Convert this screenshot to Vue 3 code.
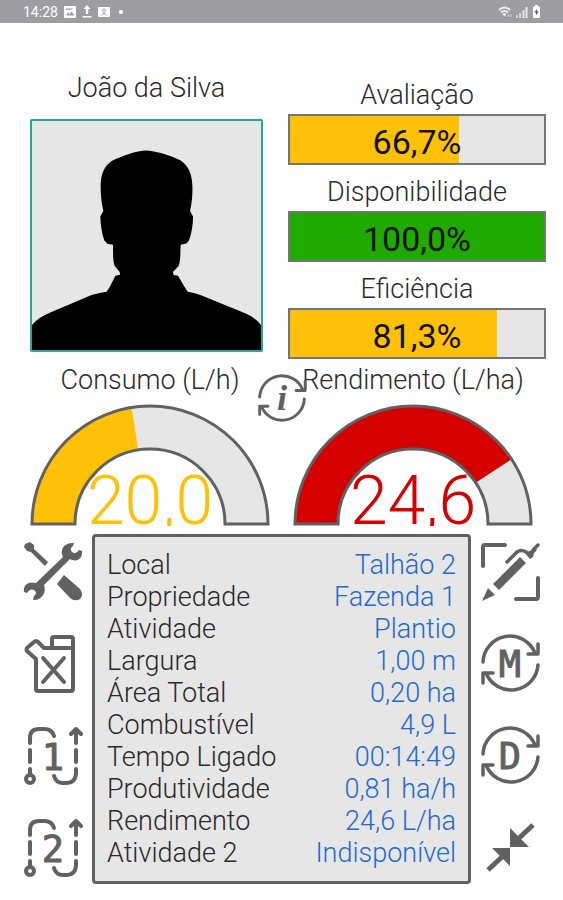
<script setup>
const bars = [
  { label: 'Avaliação', text: '66,7%', value: 66.7, color: '#ffc107' },
  { label: 'Disponibilidade', text: '100,0%', value: 100, color: '#1faa00' },
  { label: 'Eficiência', text: '81,3%', value: 81.3, color: '#ffc107' },
]

const gauges = [
  { label: 'Consumo (L/h)', text: '20,0', share: 0.45, color: '#ffc107' },
  { label: 'Rendimento (L/ha)', text: '24,6', share: 0.815, color: '#d50000' },
]

const rows = [
  ['Local', 'Talhão 2'],
  ['Propriedade', 'Fazenda 1'],
  ['Atividade', 'Plantio'],
  ['Largura', '1,00 m'],
  ['Área Total', '0,20 ha'],
  ['Combustível', '4,9 L'],
  ['Tempo Ligado', '00:14:49'],
  ['Produtividade', '0,81 ha/h'],
  ['Rendimento', '24,6 L/ha'],
  ['Atividade 2', 'Indisponível'],
]

// Half ring centred on (120, 120), filled clockwise from the left end.
function ring(share) {
  const angle = Math.PI * (1 - share)
  const at = (r) => `${(120 + r * Math.cos(angle)).toFixed(2)} ${(120 - r * Math.sin(angle)).toFixed(2)}`
  return `M2 120A118 118 0 0 1 ${at(118)}L${at(75)}A75 75 0 0 0 45 120Z`
}
</script>

<template>
  <div class="screen">
    <header class="status">
      <span class="time">14:28</span>
      <svg class="glyph" viewBox="0 0 12 12" width="12" height="12">
        <path fill="#fff" fill-rule="evenodd" d="M1 0H11Q12 0 12 1V11Q12 12 11 12H1Q0 12 0 11V1Q0 0 1 0ZM2 9.500H10.500L7.500 5.500L5.500 8L4 6.500ZM2 2.500V4L4 3.500L5.500 4L9.500 2.500Z" />
      </svg>
      <svg class="glyph" viewBox="0 0 10 13" width="10" height="13">
        <path fill="#fff" d="M5 0L8.500 4H6.200V9H3.800V4H1.500ZM0.500 11H9.500V12.500H0.500Z" />
      </svg>
      <svg class="glyph" viewBox="0 0 12 12" width="12" height="12">
        <rect y="1" width="12" height="10" rx="1" fill="#fff" />
        <circle cx="6" cy="4.500" r="1.500" fill="none" stroke="#9e9da2" />
        <path d="M3 9.500Q6 5.500 9 9.500" fill="none" stroke="#9e9da2" />
      </svg>
      <span class="dot"></span>
      <span class="spacer"></span>
      <svg viewBox="0 0 14 12" width="14" height="12">
        <path d="M1 4Q6.500-1 12 4M3 6.500Q6.500 3.500 10 6.500" fill="none" stroke="#fff" stroke-width="2" opacity=".8" />
        <path d="M4.500 8Q6.500 6.500 8.500 8L6.500 10.500Z" fill="#fff" />
        <path d="M10.500 8V11M13 8V11" stroke="#fff" opacity=".5" />
      </svg>
      <svg viewBox="0 0 12 12" width="12" height="12">
        <path d="M1 9V12M4 7V12" stroke="#fff" stroke-width="2" opacity=".6" />
        <path d="M7.500 4V12M10.500 1V12" stroke="#fff" stroke-width="2" opacity=".75" />
      </svg>
      <svg viewBox="0 0 9 13" width="9" height="13">
        <path fill="#fff" d="M3 0H6V1.500H7Q8 1.500 8 2.500V12Q8 13 7 13H2Q1 13 1 12V2.500Q1 1.500 2 1.500H3Z" />
        <path fill="#55555a" d="M5 4L2.300 7.500H4L3.800 10.500L6.700 6.500H5Z" />
      </svg>
    </header>

    <section class="summary">
      <figure class="person">
        <figcaption class="label">João da Silva</figcaption>
        <svg class="photo" viewBox="37 37 684 684" role="img" aria-label="João da Silva">
          <path d="M37 646C50 630 68 620 90 610L215 557Q240 550 260 547L270 531L286 499L300 496L299 488L284 470C279 456 279 440 279 407L262 404L253 394C245 370 242 348 241 322L250 306C244 280 242 255 242 230C243 196 252 172 276 156C305 142 348 125 380 125C410 127 455 142 480 154C505 170 515 196 516 230C517 255 515 280 509 306L518 322C518 348 514 370 506 394L498 403L481 407C480 440 480 456 475 470L458 488L460 497L473 499L492 531L502 547Q520 550 540 557L670 610C690 618 708 630 721 646V721H37Z" />
        </svg>
      </figure>
      <div class="bars">
        <div v-for="bar in bars" :key="bar.label" class="metric">
          <div class="label">{{ bar.label }}</div>
          <div class="bar" role="progressbar" :aria-label="bar.label" :aria-valuenow="bar.value">
            <div class="fill" :style="{ width: bar.value + '%', background: bar.color }"></div>
            <span class="percent">{{ bar.text }}</span>
          </div>
        </div>
      </div>
    </section>

    <section class="gauges">
      <div v-for="g in gauges" :key="g.label" class="gauge">
        <div class="label">{{ g.label }}</div>
        <div class="dial">
          <svg viewBox="0 0 240 122">
            <path :d="ring(1)" fill="#e6e6e6" />
            <path :d="ring(g.share)" :fill="g.color" />
            <path :d="ring(1)" fill="none" stroke="#616161" stroke-width="3" />
          </svg>
          <div class="reading" :style="{ color: g.color }">{{ g.text }}</div>
        </div>
      </div>
      <button class="tool info" type="button" aria-label="Informações">
        <svg class="icon" viewBox="0 0 58 58">
          <path class="line" d="M2 28A27 27 0 0 1 54 19M57 9V20H46M56 30A27 27 0 0 1 4 39M2 49V39H12" />
          <text class="serif" x="29" y="43" text-anchor="middle">i</text>
        </svg>
      </button>
    </section>

    <section class="details">
      <nav class="tools">
        <button class="tool" type="button" aria-label="Manutenção">
          <svg class="icon" viewBox="0 0 60 60">
            <path class="solid" d="M3 2L8 0L12 3L12 7L26 20L23 24L9 10L5 9L2 5Z" />
            <path class="solid" d="M42 33L58 47Q62 53 58 57Q53 60 48 56L35 42Z" />
            <path class="solid" d="M52 1C43 0 37 7 41 15L14 41C6 39 1 43 2 50L5 51Q8 46 12 48Q16 51 12 54L11 58C19 59 25 51 22 43L48 17C55 21 61 16 60 9L57 8Q54 13 50 10Q47 7 51 4Z" />
          </svg>
        </button>
        <button class="tool" type="button" aria-label="Abastecimento">
          <svg class="icon" viewBox="0 0 60 60">
            <path class="dash" d="M22 14L16 8Q14 6 12 8L5 14Q4 16 5 17L14 25V55Q14 57 16 57H49Q51 57 51 55V5Q51 3 49 3H32Q30 3 30 5V14M22 14H51M21 24L42 48M42 24L21 48" />
          </svg>
        </button>
        <button v-for="n in [1, 2]" :key="n" class="tool" type="button" :aria-label="'Atividade ' + n">
          <svg class="icon" viewBox="0 0 60 60">
            <path class="dash" d="M8 17V12Q8 3 17 3H22Q30 3 32 10M8 24V36M8 43V48M54 17V4M49 8L54 3L59 8M54 24V36M54 43V48Q53 57 45 57H41Q34 57 32 50" />
            <circle class="dash" cx="8" cy="53" r="4" />
            <text class="mono" x="31" y="44" text-anchor="middle">{{ n }}</text>
          </svg>
        </button>
      </nav>

      <div class="panel">
        <table>
          <tbody>
            <tr v-for="row in rows" :key="row[0]">
              <th scope="row">{{ row[0] }}</th>
              <td>{{ row[1] }}</td>
            </tr>
          </tbody>
        </table>
      </div>

      <nav class="tools">
        <button class="tool" type="button" aria-label="Editar área">
          <svg class="icon" viewBox="0 0 60 60">
            <path class="dash" d="M2 24V5Q2 3 4 3H24M35 57H55Q57 57 57 55V36" />
            <path class="line" d="M26 20L36 10Q40 7 45 10M53 7L57 3" />
            <path class="solid" d="M1 59L7 46L14 53ZM12 42L39 15L45 21L18 48ZM43 10L49 9L53 5L56 8L53 11L52 15L49 17Z" />
          </svg>
        </button>
        <button v-for="letter in ['M', 'D']" :key="letter" class="tool" type="button" :aria-label="'Alternar ' + letter">
          <svg class="icon" viewBox="0 0 60 60">
            <path class="line" d="M2 28A27 27 0 0 1 54 19M57 10V20H47M57 31A27 27 0 0 1 5 39M2 49V39H12" />
            <text class="mono" x="29" y="43" text-anchor="middle">{{ letter }}</text>
          </svg>
        </button>
        <button class="tool" type="button" aria-label="Reduzir">
          <svg class="icon" viewBox="0 0 60 60">
            <path class="solid" d="M29 10V29H48ZM29 30V48L11 30Z" />
            <path class="thick" d="M52 7L36 22M7 52L23 37" />
          </svg>
        </button>
      </nav>
    </section>
  </div>
</template>

<style>
body {
  margin: 0;
  background: #fff;
}
</style>

<style scoped>
.screen {
  font-family: Roboto, "Liberation Sans", sans-serif;
  font-weight: 300;
  color: #2a2a2a;
}
.status {
  display: flex;
  align-items: center;
  gap: 4px;
  height: 23px;
  padding: 0 22px 0 23px;
  background: #9e9da2;
  color: #fff;
  font-size: 14px;
  font-weight: 400;
}
.glyph {
  margin-left: 2px;
}
.dot {
  width: 4px;
  height: 4px;
  margin-left: 5px;
  border-radius: 50%;
  background: #fff;
}
.spacer {
  flex: 1;
}
.label {
  font-size: 27px;
  line-height: 38px;
  text-align: center;
  white-space: nowrap;
}
.summary {
  display: grid;
  grid-template-columns: 233fr 258fr;
  gap: 25px;
  padding: 46px 17px 0 30px;
}
.person {
  margin: 0;
}
.photo {
  display: block;
  box-sizing: border-box;
  width: 100%;
  margin-top: 12px;
  border: 2px solid #26a69a;
  border-radius: 2px;
  background: #e6e6e6;
}
.bars {
  display: flex;
  flex-direction: column;
  gap: 8px;
  padding-top: 7px;
}
.bar {
  position: relative;
  box-sizing: border-box;
  height: 51px;
  border: 2px solid #757575;
  background: #e6e6e6;
}
.fill {
  height: 100%;
}
.percent {
  position: absolute;
  inset: 4px 0 0;
  color: #111;
  font-size: 34px;
  font-weight: 400;
  line-height: 44px;
  text-align: center;
}
.gauges {
  position: relative;
  display: grid;
  grid-template-columns: 1fr 1fr;
  gap: 23px;
  padding: 2px 30px 0;
}
.dial {
  position: relative;
  margin-top: 5px;
}
.dial svg {
  display: block;
  width: 100%;
}
.reading {
  position: absolute;
  inset: auto 0 0;
  height: 61px;
  overflow: hidden;
  font-size: 68px;
  line-height: 72px;
  text-align: center;
}
.tool {
  display: block;
  width: 60px;
  height: 60px;
  padding: 0;
  border: 0;
  background: none;
  color: #616161;
  cursor: pointer;
}
.info {
  position: absolute;
  top: 15px;
  left: calc(50% - 24px);
  width: 48px;
  height: 48px;
}
.icon {
  display: block;
  width: 100%;
  height: 100%;
  overflow: visible;
}
.solid {
  fill: currentColor;
}
.line,
.dash,
.thick {
  fill: none;
  stroke: currentColor;
  stroke-width: 4;
  stroke-linecap: round;
  stroke-linejoin: round;
}
.line {
  stroke-width: 3.5;
}
.thick {
  stroke-width: 5;
  stroke-linecap: butt;
}
.mono {
  font: 400 37px "DejaVu Sans Mono", monospace;
  fill: currentColor;
  stroke: currentColor;
  stroke-linejoin: round;
}
.serif {
  font: italic 700 44px "Liberation Serif", serif;
  fill: currentColor;
}
.details {
  display: grid;
  grid-template-columns: 60px 1fr 60px;
  gap: 10px;
  padding: 8px 22px 0;
}
.tools {
  display: flex;
  flex-direction: column;
  gap: 32px;
  padding-top: 8px;
}
.panel {
  padding: 12px;
  border: 3px solid #616161;
  border-radius: 4px;
  background: #e6e6e6;
}
table {
  width: 100%;
  border-collapse: collapse;
}
th,
td {
  padding: 0;
  font-size: 27px;
  font-weight: 300;
  line-height: 32px;
  text-align: left;
  white-space: nowrap;
}
td {
  color: #1e6bcb;
  text-align: right;
}
</style>
